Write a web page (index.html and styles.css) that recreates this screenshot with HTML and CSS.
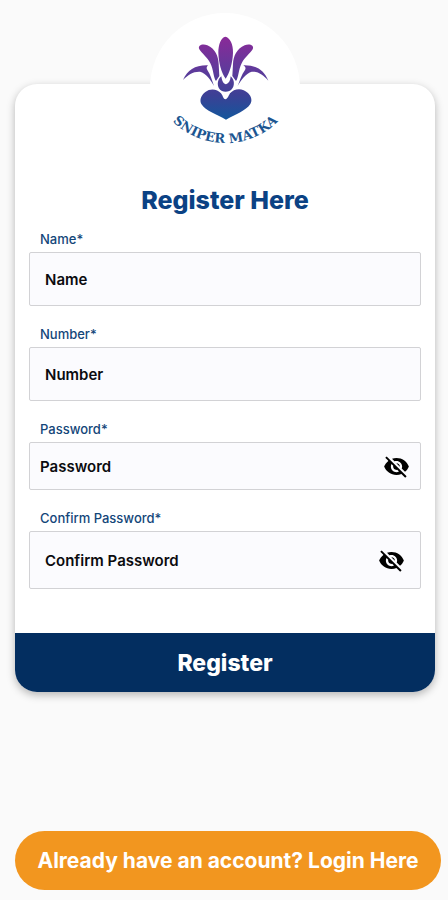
FILE: index.html
```html
<!DOCTYPE html>
<html lang="en">
<head>
    <meta charset="UTF-8">
    <meta name="viewport" content="width=device-width, initial-scale=1.0">
    <title>Register</title>
    <link rel="stylesheet" href="styles.css">
</head>
<body>
    <svg class="sprite" aria-hidden="true">
        <symbol id="eye-off" viewBox="0 0 24 24">
            <path d="M12 7c2.76 0 5 2.24 5 5 0 .65-.13 1.26-.36 1.83l2.92 2.92c1.51-1.26 2.7-2.89 3.43-4.75-1.73-4.39-6-7.5-11-7.5-1.4 0-2.74.25-3.98.7l2.16 2.16C10.74 7.13 11.35 7 12 7zM2 4.27l2.28 2.28.46.46C3.08 8.3 1.78 10.02 1 12c1.73 4.39 6 7.5 11 7.5 1.55 0 3.03-.3 4.38-.84l.42.42L19.73 22 21 20.73 3.27 3 2 4.27zM7.53 9.8l1.55 1.55c-.05.21-.08.43-.08.65 0 1.66 1.34 3 3 3 .22 0 .44-.03.65-.08l1.55 1.55c-.67.33-1.41.53-2.2.53-2.76 0-5-2.24-5-5 0-.79.2-1.53.53-2.2zm4.31-.78l3.15 3.15.02-.16c0-1.66-1.34-3-3-3l-.17.01z"/>
        </symbol>
    </svg>

    <main class="page">
        <form class="card">
            <div class="logo">
                <svg viewBox="30 39 450 450" role="img" aria-label="Sniper Matka">
                    <defs>
                        <linearGradient id="flower" gradientUnits="userSpaceOnUse" x1="0" y1="110" x2="0" y2="360">
                            <stop offset="0" stop-color="#8a2a98"/>
                            <stop offset="0.4" stop-color="#5f3a9b"/>
                            <stop offset="0.7" stop-color="#3c4095"/>
                            <stop offset="1" stop-color="#12579c"/>
                        </linearGradient>
                        <path id="arc" d="M88 354 A226 226 0 0 0 424 354"/>
                    </defs>
                    <g fill="url(#flower)">
                        <path d="M256 110C270 112 280 134 279 158C278 190 268 220 257 236C244 218 236 188 235 158C235 134 243 112 256 110Z"/>
                        <path d="M178 148C172 136 188 130 202 136C226 147 235 168 236 192L238 228L228 243C220 232 221 210 211 190C202 172 185 160 178 148Z"/>
                        <path d="M338 148C344 136 328 130 314 136C290 147 280 168 279 192L277 228L288 243C296 232 295 210 305 190C314 172 331 160 338 148Z"/>
                        <path d="M129 240C143 210 165 195 204 196C199 201 199 205 202 210C212 225 216 240 222 258C211 237 198 220 180 215C160 214 144 224 129 240Z"/>
                        <path d="M385 242C371 210 349 195 310 196C317 201 318 205 315 210C304 225 300 240 293 258C304 237 319 220 335 215C354 214 370 224 385 242Z"/>
                        <path d="M244 229C246 244 251 252 258 253C266 251 271 243 272 229C287 241 284 267 268 273C261 276 252 276 246 273C229 265 230 239 244 229Z"/>
                        <path d="M256 298C263 297 266 287 270 280C282 265 307 262 324 279C335 290 337 303 331 312C318 332 285 344 258 359C232 344 197 333 184 312C178 300 183 286 196 276C211 264 232 267 243 280C249 287 249 297 256 298Z"/>
                    </g>
                    <text class="logo-text"><textPath href="#arc" startOffset="50%">SNIPER MATKA</textPath></text>
                </svg>
            </div>

            <div class="fields">
                <h1>Register Here</h1>

                <div class="field">
                    <label for="name">Name*</label>
                    <div class="box">
                        <input type="text" id="name" placeholder="Name">
                    </div>
                </div>

                <div class="field">
                    <label for="number">Number*</label>
                    <div class="box">
                        <input type="tel" id="number" placeholder="Number">
                    </div>
                </div>

                <div class="field">
                    <label for="password">Password*</label>
                    <div class="box box-small">
                        <input type="password" id="password" placeholder="Password">
                        <button type="button" class="eye" aria-label="Show password"><svg><use href="#eye-off"/></svg></button>
                    </div>
                </div>

                <div class="field">
                    <label for="confirm">Confirm Password*</label>
                    <div class="box box-large">
                        <input type="password" id="confirm" placeholder="Confirm Password">
                        <button type="button" class="eye" aria-label="Show confirm password"><svg><use href="#eye-off"/></svg></button>
                    </div>
                </div>
            </div>

            <button type="submit" class="register-btn">Register</button>
        </form>

        <a class="login-link" href="#">Already have an account? Login Here</a>
    </main>
</body>
</html>
```

FILE: styles.css
```css
* {
    box-sizing: border-box;
}
body {
    margin: 0;
    font-family: Inter, 'Liberation Sans', sans-serif;
    background: #fafafa;
    color: #0b0b0f;
}
.sprite {
    display: none;
}
.page {
    display: flex;
    flex-direction: column;
    min-height: 100vh;
    padding: 84px 7px 10px 15px;
}
.card {
    margin-right: 6px;
    background: #fff;
    border-radius: 22px;
    box-shadow: 0 3px 8px rgba(0, 0, 0, 0.28);
}
.logo {
    width: 150px;
    height: 150px;
    margin: -71px auto 0;
    background: #fff;
    border-radius: 50%;
}
.logo svg {
    display: block;
    width: 100%;
    height: 100%;
}
.logo-text {
    font-family: 'DejaVu Serif', serif;
    font-size: 39px;
    font-weight: bold;
    fill: #1c5691;
    text-anchor: middle;
}
.fields {
    display: flex;
    flex-direction: column;
    gap: 20px;
    padding: 21px 14px 44px;
}
h1 {
    margin: 0 0 -5px;
    font-size: 25px;
    line-height: 32px;
    font-weight: 800;
    text-align: center;
    color: #0b4284;
}
label {
    display: block;
    margin: 0 0 5px 11px;
    font-size: 13px;
    line-height: 16px;
    font-weight: 500;
    color: #134679;
}
.box {
    display: flex;
    align-items: center;
    height: 54px;
    padding: 0 15px;
    background: #fbfbfe;
    border: 1px solid #d2d2d5;
    border-radius: 2px;
}
.box-small {
    height: 48px;
    padding: 0 10px;
}
.box-large {
    height: 58px;
}
input {
    flex: 1;
    min-width: 0;
    padding: 0;
    border: none;
    outline: none;
    background: none;
    font: inherit;
    font-size: 15px;
    font-weight: 600;
}
input::placeholder {
    color: #0b0b0f;
    opacity: 1;
}
.eye {
    padding: 0;
    border: none;
    background: none;
    cursor: pointer;
}
.eye svg {
    display: block;
    width: 27px;
    height: 27px;
}
.register-btn {
    display: block;
    width: 100%;
    height: 59px;
    border: none;
    border-radius: 0 0 22px 22px;
    background: #032e60;
    color: #fff;
    font: inherit;
    font-size: 23px;
    font-weight: 800;
    cursor: pointer;
}
.login-link {
    margin-top: auto;
    border-radius: 30px;
    background: #f2961f;
    color: #fff;
    font-size: 21px;
    line-height: 59px;
    font-weight: 700;
    text-align: center;
    text-decoration: none;
    white-space: nowrap;
}
```
